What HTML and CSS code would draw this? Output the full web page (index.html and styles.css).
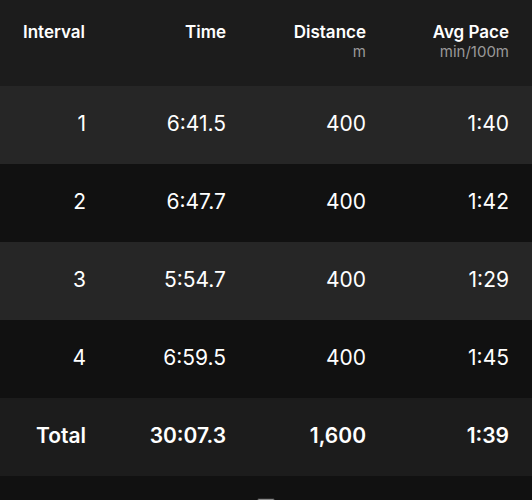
FILE: index.html
```
<!DOCTYPE html>
<html>
<head>
<meta charset="utf-8">
<link rel="stylesheet" href="styles.css">
</head>
<body>
<div class="table">
  <div class="row head">
    <div class="cell first"><span class="h">Interval</span></div>
    <div class="cell"><span class="h">Time</span></div>
    <div class="cell"><span class="h">Distance</span><span class="unit">m</span></div>
    <div class="cell"><span class="h">Avg Pace</span><span class="unit">min/100m</span></div>
  </div>
  <div class="row light">
    <div class="cell">1</div><div class="cell">6:41.5</div><div class="cell">400</div><div class="cell">1:40</div>
  </div>
  <div class="row dark">
    <div class="cell">2</div><div class="cell">6:47.7</div><div class="cell">400</div><div class="cell">1:42</div>
  </div>
  <div class="row light">
    <div class="cell">3</div><div class="cell">5:54.7</div><div class="cell">400</div><div class="cell">1:29</div>
  </div>
  <div class="row dark">
    <div class="cell">4</div><div class="cell">6:59.5</div><div class="cell">400</div><div class="cell">1:45</div>
  </div>
  <div class="row total">
    <div class="cell">Total</div><div class="cell">30:07.3</div><div class="cell">1,600</div><div class="cell">1:39</div>
  </div>
  <div class="footer"><div class="handle"></div></div>
</div>
</body>
</html>
```
FILE: styles.css
```
html, body {
  margin: 0;
  padding: 0;
  background: #111111;
}
body {
  font-family: Inter, "Noto Sans", sans-serif;
  color: #ffffff;
  width: 532px;
  height: 500px;
  overflow: hidden;
}
.table {
  display: flex;
  flex-direction: column;
}
.row {
  display: grid;
  grid-template-columns: 63px 140px 140px 143px;
  padding: 0 23px 4px;
  height: 78px;
  box-sizing: border-box;
  align-items: center;
  font-size: 21px;
}
.cell {
  text-align: right;
  display: flex;
  flex-direction: column;
  align-items: flex-end;
}
.head {
  height: 86px;
  padding-bottom: 0;
  background: #1c1c1c;
}
.head .first {
  align-items: flex-start;
}
.head .cell {
  align-self: start;
  margin-top: 22px;
}
.h {
  font-size: 17px;
  font-weight: 600;
  line-height: 21px;
}
.unit {
  font-size: 15px;
  color: #999999;
  line-height: 18px;
}
.light {
  background: #262626;
}
.dark {
  background: #111111;
}
.total {
  background: #1c1c1c;
  font-weight: 600;
}
.footer {
  height: 24px;
  background: #111111;
  display: flex;
  justify-content: center;
}
.handle {
  margin-top: 22px;
  width: 16px;
  height: 6px;
  border-radius: 2px;
  background: #8a8a8a;
  border: 1px solid #2a2a2a;
}
```
